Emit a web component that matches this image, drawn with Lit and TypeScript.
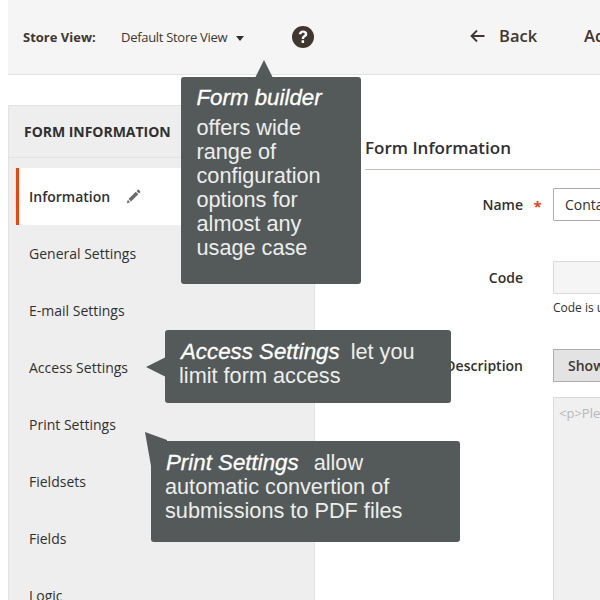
import { LitElement, html, css } from 'lit';
import { customElement } from 'lit/decorators.js';

const menu = ['General Settings', 'E-mail Settings', 'Access Settings', 'Print Settings', 'Fieldsets', 'Fields', 'Logic'];

@customElement('app-root')
export class AppRoot extends LitElement {
  static styles = css`
    :host {
      display: block;
      position: relative;
      width: 600px;
      height: 600px;
      overflow: hidden;
      background: #fff;
      font-family: "Open Sans", sans-serif;
      color: #303030;
    }

    .top {
      margin-left: 8px;
      height: 74px;
      box-sizing: content-box;
      background: #f5f5f5;
      border-bottom: 1px solid #e3e3e3;
      display: flex;
      align-items: center;
      padding-left: 15px;
      white-space: nowrap;
      overflow: hidden;
    }
    .top > * { flex: none; }
    .store-label { font-size: 13px; font-weight: 700; color: #41362f; width: 98px; }
    .store { font-size: 13px; letter-spacing: -0.3px; color: #41362f; width: 115px; }
    .caret {
      width: 0;
      height: 0;
      border-left: 4.5px solid transparent;
      border-right: 4.5px solid transparent;
      border-top: 5px solid #303030;
      margin-top: 2px;
    }
    .help { margin-left: 48px; display: block; }
    .back-icon { margin-left: 156px; margin-top: -2px; display: block; }
    .back { margin-left: 14px; margin-top: -3px; font-size: 16.5px; font-weight: 600; color: #41362f; }
    .next { margin-left: 47px; margin-top: -3px; font-size: 16.5px; font-weight: 600; color: #41362f; }

    .body { display: flex; margin-top: 30px; margin-left: 8px; }

    .side {
      flex: none;
      width: 305px;
      height: 500px;
      background: #eeeeee;
      border: 1px solid #e3e3e3;
    }
    .side-head {
      height: 51px;
      border-bottom: 1px solid #e3e3e3;
      display: flex;
      align-items: center;
      padding-left: 15px;
      font-size: 14px;
      letter-spacing: -0.03px;
      font-weight: 700;
      color: #303030;
    }
    .items { margin-top: 10px; margin-left: 7px; }
    .item {
      height: 57px;
      display: flex;
      align-items: center;
      padding-left: 13px;
      font-size: 14px;
      color: #303030;
    }
    .item.on {
      box-sizing: border-box;
      background: #fff;
      border-left: 3px solid #f0420a;
      padding-left: 10px;
      font-weight: 600;
      gap: 16px;
    }
    .item.on svg { display: block; }

    .main { flex: 1; padding-left: 50px; min-width: 0; }
    .main h2 {
      margin: 28px 0 0;
      height: 36px;
      font-size: 17px;
      line-height: 30px;
      font-weight: 600;
      color: #303030;
      border-bottom: 1px solid #c8c1b9;
      white-space: nowrap;
    }
    .row {
      display: grid;
      grid-template-columns: 158px 30px 400px;
      align-items: center;
      white-space: nowrap;
    }
    .row .lab { text-align: right; font-size: 14px; font-weight: 600; color: #303030; }
    .star { color: #e8401c; font-size: 15px; text-align: center; font-weight: 700; padding: 2px 1px 0 0; }
    .box {
      box-sizing: border-box;
      height: 33px;
      border: 1px solid #adadad;
      padding-left: 11px;
      font-size: 14px;
      line-height: 31px;
      color: #303030;
      border-radius: 1px;
    }
    .box.off { background: #f5f5f5; border-color: #dadada; }
    .btn {
      box-sizing: border-box;
      height: 33px;
      width: 160px;
      background: #e3e3e3;
      border: 1px solid #adadad;
      padding-left: 14px;
      font-size: 14px;
      font-weight: 600;
      line-height: 31px;
      color: #41362f;
    }
    .note {
      margin-left: 188px;
      margin-top: 7px;
      font-size: 12px;
      line-height: 14px;
      color: #303030;
      white-space: nowrap;
    }
    .area {
      margin-left: 188px;
      margin-top: 15px;
      box-sizing: border-box;
      width: 400px;
      height: 300px;
      background: #f0f0f0;
      border: 1px solid #dadada;
      padding: 6px 5px;
      font-size: 13px;
      color: #b8b8b8;
      white-space: nowrap;
    }

    .tip {
      position: absolute;
      z-index: 2;
      box-sizing: border-box;
      background: #545a59;
      border-radius: 3px;
      color: #eceeed;
      font-family: "Liberation Sans", Arial, sans-serif;
      font-size: 21.7px;
      line-height: 24px;
    }
    .tip b { font-size: 22.3px; font-style: italic; font-weight: 400; color: #fff; -webkit-text-stroke: 0.3px #fff; margin-right: 9px; }
    .tip svg { position: absolute; display: block; }
    .t1 { left: 181px; top: 77px; width: 180px; height: 207px; padding: 9px 15.500px; }
    .t1 b { display: block; margin-bottom: 6px; }
    .t1 svg { left: 74px; top: -17px; }
    .t2 { left: 165px; top: 330px; width: 286px; height: 73px; padding: 10px 14px; }
    .t2 b { margin-left: 2px; margin-right: 5px; }
    .t2 svg { left: -19px; top: 27px; }
    .t3 { left: 151px; top: 441px; width: 309px; height: 101px; padding: 10px 14px; }
    .t3 b { margin-left: 1px; }
    .t3 svg { left: -6px; top: -9px; }
  `;

  render() {
    return html`
      <div class="top">
        <span class="store-label">Store View:</span>
        <span class="store">Default Store View</span>
        <span class="caret"></span>
        <svg class="help" width="22" height="22" viewBox="0 0 22 22">
          <circle cx="11" cy="11" r="11" fill="#41362f"></circle>
          <path d="M6.800 8.300c.2-2.600 2-3.900 4.300-3.900 2.500 0 4.200 1.400 4.200 3.500 0 1.700-1 2.400-2 3.100-.8.600-1.200 1-1.200 2.100H9.700c0-1.800.6-2.700 1.700-3.500.8-.6 1.300-1 1.300-1.600 0-.8-.6-1.300-1.600-1.300s-1.600.6-1.700 1.600z M9.600 14.300h2.500v2.600H9.600z" fill="#fff"></path>
        </svg>
        <svg class="back-icon" width="15" height="14" viewBox="0 0 15 14">
          <path d="M14.500 7H2M7 1.500 1.500 7 7 12.500" fill="none" stroke="#41362f" stroke-width="1.800"></path>
        </svg>
        <span class="back">Back</span>
        <span class="next">Add</span>
      </div>

      <div class="body">
        <aside class="side">
          <div class="side-head">FORM INFORMATION</div>
          <div class="items">
            <div class="item on">
              Information
              <svg width="15" height="15" viewBox="0 0 15 15">
                <path d="M0.800 14.200 1.800 10.800 4.200 13.200z M2.500 10 9.800 2.700 12.300 5.200 5 12.500z M10.600 1.900 11.700.8c.3-.3.700-.3 1 0l1.500 1.500c.3.300.3.700 0 1l-1.100 1.100z" fill="#6a6a6a"></path>
              </svg>
            </div>
            ${menu.map((m) => html`<div class="item">${m}</div>`)}
          </div>
        </aside>

        <section class="main">
          <h2>Form Information</h2>
          <div class="row" style="margin-top:18px">
            <span class="lab">Name</span>
            <span class="star">*</span>
            <div class="box">Contact Us</div>
          </div>
          <div class="row" style="margin-top:40px">
            <span class="lab">Code</span>
            <span></span>
            <div class="box off"></div>
          </div>
          <div class="note">Code is used to identify the form</div>
          <div class="row" style="margin-top:34px">
            <span class="lab">Description</span>
            <span></span>
            <div class="btn">Show / Hide Editor</div>
          </div>
          <div class="area">&lt;p&gt;Please fill out the form</div>
        </section>
      </div>

      <div class="tip t1">
        <svg width="18" height="18" viewBox="0 0 18 18"><path d="M9 0 18 18H0z" fill="#545a59"></path></svg>
        <b>Form builder</b>
        offers wide range of configuration options for almost any usage case
      </div>
      <div class="tip t2">
        <svg width="20" height="20" viewBox="0 0 20 20"><path d="M0 10 20 0V20z" fill="#545a59"></path></svg>
        <b>Access Settings</b> let you limit form access
      </div>
      <div class="tip t3">
        <svg width="22" height="34" viewBox="0 0 22 34"><path d="M0 0 22 8V12H8V34H6z" fill="#545a59"></path></svg>
        <b>Print Settings</b> allow automatic convertion of submissions to PDF files
      </div>
    `;
  }
}
